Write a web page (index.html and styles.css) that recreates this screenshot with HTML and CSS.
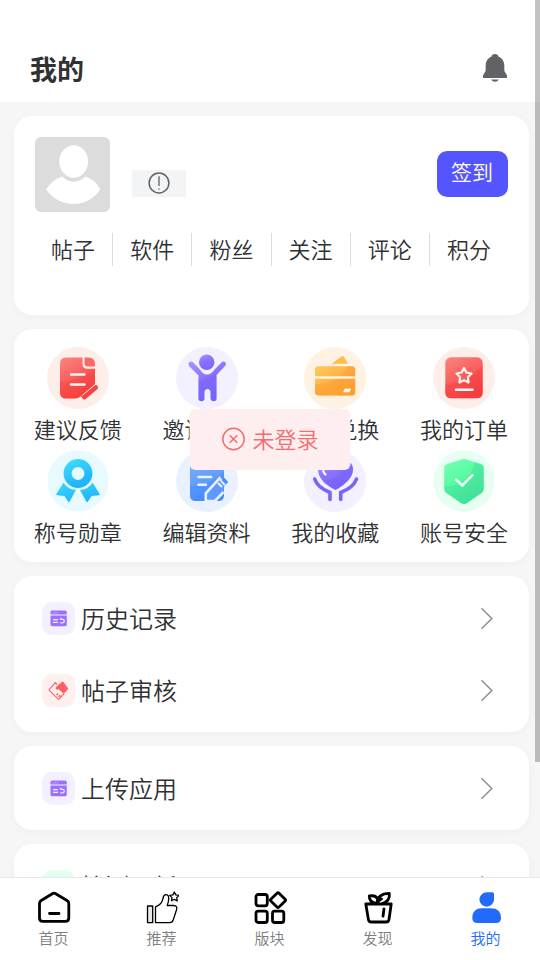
FILE: index.html
```html
<!DOCTYPE html>
<html lang="zh-CN">
<head>
<meta charset="utf-8">
<meta name="viewport" content="width=device-width, initial-scale=1">
<title>我的</title>
<link rel="stylesheet" href="styles.css">
</head>
<body>
<svg class="defs" width="0" height="0" aria-hidden="true">
  <defs>
    <linearGradient id="red" x1="0" y1="0" x2=".5" y2="1"><stop offset="0" stop-color="#f98580"/><stop offset=".5" stop-color="#fa6260"/><stop offset="1" stop-color="#f63f3f"/></linearGradient>
    <linearGradient id="violet" x1="0" y1="0" x2=".5" y2="1"><stop offset="0" stop-color="#ad95ff"/><stop offset=".5" stop-color="#8a72ff"/><stop offset="1" stop-color="#7866fa"/></linearGradient>
    <linearGradient id="orange" x1="0" y1="0" x2="1" y2="1"><stop offset="0" stop-color="#ffc95a"/><stop offset="1" stop-color="#fd9b2b"/></linearGradient>
    <linearGradient id="cyan" x1="0" y1="0" x2=".5" y2="1"><stop offset="0" stop-color="#3ed8fb"/><stop offset="1" stop-color="#1fb6fc"/></linearGradient>
    <linearGradient id="blue" x1="0" y1="0" x2=".5" y2="1"><stop offset="0" stop-color="#7eb0ff"/><stop offset="1" stop-color="#4b90ff"/></linearGradient>
    <linearGradient id="green" x1="0" y1="0" x2=".6" y2="1"><stop offset="0" stop-color="#78ffb8"/><stop offset=".45" stop-color="#5cfba3"/><stop offset="1" stop-color="#45e29b"/></linearGradient>
    <symbol id="chevron" viewBox="0 0 13 23"><path d="M1.500 1.200 11.800 11.500 1.500 21.800" fill="none" stroke="#909399" stroke-width="1.600"/></symbol>
    <symbol id="window" viewBox="0 0 33 33"><path d="M8.500 12.400V10.200q0-1.700 1.700-1.700h12.900q1.700 0 1.700 1.700v2.200zM8.500 13.500h16.300v9q0 1.700-1.700 1.700H10.200q-1.700 0-1.700-1.700z" fill="#9b70ff"/><path d="M10.500 10.900h.9m1.300 0h.9m1.300 0h.9" stroke="#e0d2ff"/><path d="M11 17.700h5m-5 2.600h5m2.700-3h2q1.600 0 1.600 1.800t-2.200 1.800h-1.800m1.100-5-1.500 1.400" stroke="#eee7ff" stroke-width="1.200" fill="none"/></symbol>
  </defs>
</svg>

<header class="header">
  <h1>我的</h1>
  <button class="bell" type="button" aria-label="通知">
    <svg viewBox="0 0 26 30"><path d="M13 1c1.900 0 3.300 1.100 3.600 2.700 3.800 1.400 5.700 4.800 5.700 8.800v4.700c0 2 2.900 4.100 2.900 6.500 0 .8-.5 1.300-1.300 1.300H2.100C1.300 25 .8 24.500.8 23.700c0-2.400 2.900-4.500 2.900-6.500v-4.700c0-4 1.900-7.400 5.700-8.800C9.700 2.100 11.100 1 13 1zM9 26.500h8q-1.600 2.200-4 2.200t-4-2.200z" fill="#606266"/></svg>
  </button>
</header>

<main class="content">
  <section class="card profile">
    <div class="profile-top">
      <svg class="avatar" viewBox="0 0 75 75"><rect width="75" height="75" fill="#dcdcdc"/><ellipse cx="38.700" cy="24.500" rx="14.400" ry="16.300" fill="#fff"/><path d="M27 39.500q11.500 10.500 23.500 0Q60.500 43 65.300 52.500 55 67 38.500 67T11 52.500Q17 43 27 39.500z" fill="#fff"/></svg>
      <span class="level"><svg viewBox="0 0 22 22"><circle cx="11" cy="11" r="9.900" fill="none" stroke="#606266" stroke-width="1.500"/><path d="M11 4.200v9.800m0 2.500v1.200" stroke="#606266" stroke-width="1.300"/></svg></span>
      <button class="sign" type="button">签到</button>
    </div>
    <nav class="stats">
      <a href="#">帖子</a><a href="#">软件</a><a href="#">粉丝</a><a href="#">关注</a><a href="#">评论</a><a href="#">积分</a>
    </nav>
  </section>

  <nav class="card grid">
    <a href="#">
      <svg viewBox="0 0 62 62"><circle cx="31" cy="31" r="31" fill="#feeee9"/><path d="M19 10.500h16.500V17q0 4.700 4.700 4.700H48V37L34 49q-3 2.500-6 2.500h-9q-6 0-6-6v-29q0-6 6-6z" fill="url(#red)"/><path d="M37.500 10.500h4q6.500 0 6.500 6.500v2.500h-7q-3.500 0-3.500-3.500z" fill="#f96a66"/><path d="M13 35Q33 34 48 21.500V37L34 49q-3 2.500-6 2.500h-9q-6 0-6-6z" fill="#f53b3b" opacity=".35"/><path d="M24 27.500h13.500M24 37.500h13.500" stroke="#fff3f0" stroke-width="2.400" stroke-linecap="round"/><path d="m37.500 50 11.300-9.500" stroke="#f54442" stroke-width="4.600" stroke-linecap="round"/><path d="m34.500 48.500 2.600 3.500" stroke="#f54442" stroke-width="1.500"/></svg>
      <span>建议反馈</span>
    </a>
    <a href="#">
      <svg viewBox="0 0 62 62"><circle cx="31" cy="31" r="31" fill="#f3f1ff"/><circle cx="30.700" cy="15.300" r="7.700" fill="url(#violet)"/><path d="M12.500 17.500q0-3 2.800-3 1 0 2 .9L24 22.500q3 5 7 5t7.500-5l7-7.100q1-.9 2-.9 2.300 0 2.300 2.700 0 .9-.8 1.800L40.500 28v23.500q0 2.700-2.800 2.700T34.600 51.500v-6q0-3.500-3.100-3.500t-3.100 3.500v6q0 2.700-3 2.700t-2.900-2.700V28.500l-9.200-9.200q-.8-.8-.8-1.800z" fill="url(#violet)"/><path d="M22.500 34Q31 33 40.500 26v25.500q0 2.700-2.800 2.700T34.600 51.500v-6q0-3.500-3.100-3.500t-3.100 3.500v6q0 2.700-3 2.700t-2.900-2.700z" fill="#705efa" opacity=".35"/></svg>
      <span>邀请好友</span>
    </a>
    <a href="#">
      <svg viewBox="0 0 62 62"><circle cx="31" cy="31" r="31" fill="#fff2e2"/><path d="m27.500 16.800 10-7.300q1.500-1 2.500.4l4 6.900z" fill="#fdbd4b"/><rect x="11" y="19.300" width="40.200" height="29.200" rx="3.500" fill="url(#orange)"/><path d="M11 37.500Q34 37 44 19.300h4q3.200 0 3.200 3.500V45q0 3.500-3.500 3.500H14.500Q11 48.500 11 45z" fill="#fe9c31" opacity=".5"/><path d="M11 30.500h40.200" stroke="#fff2e2" stroke-width="2.600"/><path d="m39 45.200 1.700-3.500h6.200l-1.600 3.500z" fill="#fff"/></svg>
      <span>积分兑换</span>
    </a>
    <a href="#">
      <svg viewBox="0 0 62 62"><circle cx="31" cy="31" r="31" fill="#feeee9"/><rect x="12.300" y="10.300" width="37.400" height="41" rx="5.500" fill="url(#red)"/><path d="M12.300 37Q36 37 49.700 18v28q0 5.300-5.300 5.300H17.600q-5.300 0-5.300-5.300z" fill="#f53b3b" opacity=".4"/><path d="m31 21 2.400 4.500 5.100 1-3.600 3.800.7 5.200-4.600-2.200-4.600 2.200.7-5.200-3.600-3.800 5.100-1z" fill="none" stroke="#fff2f0" stroke-width="2.200" stroke-linejoin="round"/><path d="M23 42.700h16.500" stroke="#fff" stroke-width="2.400" stroke-linecap="round"/></svg>
      <span>我的订单</span>
    </a>
    <a href="#">
      <svg viewBox="0 0 62 62"><circle cx="31" cy="31" r="30.500" fill="#e7faff"/><path d="M16.500 32.500Q20 39 29 40l-6.300 11.500q-.8 1.300-1.700 0L17.500 46l-7.300-.8q-1.500-.2-.7-1.500zM45.500 32.500Q42 39 33 40l6.300 11.500q.8 1.300 1.700 0l3.500-5.500 7.300-.8q1.500-.2.700-1.500z" fill="url(#cyan)"/><circle cx="31" cy="23.500" r="10.400" fill="none" stroke="url(#cyan)" stroke-width="8"/></svg>
      <span>称号勋章</span>
    </a>
    <a href="#">
      <svg viewBox="0 0 62 62"><circle cx="31" cy="31" r="31" fill="#e9f1ff"/><rect x="14" y="10.500" width="34" height="40.500" rx="5.500" fill="url(#blue)"/><path d="M14 36Q34 36 48 22v23.500q0 5.500-5.500 5.500h-23q-5.500 0-5.500-5.500z" fill="#3b84ff" opacity=".35"/><path d="M22.500 27h12.700m-12.700 7.700h7.500" stroke="#edf4ff" stroke-width="2.500" stroke-linecap="round"/><path d="m48.500 34.500-5-6.200-13.700 15V51H39l8.500-9" fill="#5d99ff" stroke="#e9f1ff" stroke-width="2.600"/><path d="m46.800 28.800 4.200 4.500" stroke="#4b8cff" stroke-width="3.500"/><path d="m42 33 4 4" stroke="#e9f1ff" stroke-width="2"/></svg>
      <span>编辑资料</span>
    </a>
    <a href="#">
      <svg viewBox="0 0 62 62"><circle cx="31" cy="31" r="31" fill="#f3f1ff"/><path d="M31.500 40Q14 31 14 19.500C14 9 26 7 31.500 14.500 37 7 49 9 49 19.500 49 31 31.500 40 31.500 40z" fill="url(#violet)"/><path d="M18 31Q38 29 44.500 11.500q4.500 2.500 4.500 8Q49 31 31.500 40 23 36 18 31z" fill="#705efa" opacity=".35"/><path d="M19.500 18q-1 4 2 6.500" fill="none" stroke="#fff" stroke-width="2.200" stroke-linecap="round"/><path d="M10.700 29q2.800 8.500 15.300 13.500v7m26.500-20.500q-2.800 8.500-15.800 13.500v7" fill="none" stroke="#7866fa" stroke-width="3.600" stroke-linecap="round"/></svg>
      <span>我的收藏</span>
    </a>
    <a href="#">
      <svg viewBox="0 0 62 62"><circle cx="31" cy="31" r="30.500" fill="#e5fff0"/><path d="M29 9.200q2-.8 4 0l15.300 5q2.400.8 2.400 3.300V39q0 2.300-1.800 3.700L34 53q-3 1.800-6 0L13 42.700Q11.200 41.300 11.200 39V17.500q0-2.500 2.400-3.300z" fill="url(#green)"/><path d="M11.200 36Q36 37 42 12l6.300 2.200q2.400.8 2.400 3.300V39q0 2.300-1.800 3.700L34 53q-3 1.800-6 0L13 42.700Q11.200 41.300 11.200 39z" fill="#3fdc98" opacity=".4"/><path d="m23.200 29.500 6 6 10.300-10.300" fill="none" stroke="#eafff4" stroke-width="2.600" stroke-linecap="round"/></svg>
      <span>账号安全</span>
    </a>
  </nav>

  <nav class="card menu">
    <a href="#"><svg class="tile purple" viewBox="0 0 33 33"><use href="#window"/></svg><span>历史记录</span><svg class="arrow"><use href="#chevron"/></svg></a>
    <a href="#"><svg class="tile rose" viewBox="0 0 33 33"><path d="m13.500 8.700-6 6.300q-.8.900 0 1.700l8.300 8q.8.800 1.600 0l1.600-1.700" fill="none" stroke="#ff5e63" stroke-width="1.100"/><path d="m14.500 12.500 5.300-4.400q1-.7 1.900.1l4.100 5.800q.6.900-.2 1.700l-3.800 4-5-4.500q-2.500 1.200-3.300-.7z" fill="#ff5e63"/><path d="m12.500 8.500 2.500 1.800m-.5 10.700 1.500-1.500m.5 3.300 1.600-1.600m.5 1.800 1.500-1.500m.4-.4 1.800-1.300" stroke="#ff5e63" stroke-width="1.500"/></svg><span>帖子审核</span><svg class="arrow"><use href="#chevron"/></svg></a>
  </nav>
  <nav class="card menu">
    <a href="#"><svg class="tile purple" viewBox="0 0 33 33"><use href="#window"/></svg><span>上传应用</span><svg class="arrow"><use href="#chevron"/></svg></a>
  </nav>
  <nav class="card menu">
    <a href="#"><svg class="tile mint" viewBox="0 0 33 33"><path d="M10 16.500a6.500 6.500 0 1 1 2 4.500" fill="none" stroke="#3fdc98" stroke-width="2"/></svg><span>检测更新</span><svg class="arrow"><use href="#chevron"/></svg></a>
  </nav>
</main>

<nav class="tabbar">
  <a href="#"><svg viewBox="0 0 34 34"><path d="M15.300 3.700q1.700-1 3.400 0L30 10.500q1.800 1 1.800 3V28q0 3.300-3.300 3.300H5.800q-3.300 0-3.300-3.300V13.500q0-2 1.700-3zM12.500 23.500h9.500" class="bold"/></svg><span>首页</span></a>
  <a href="#"><svg viewBox="0 0 34 34"><path d="M2.500 16h5.200v16.600H2.500z" class="thin cuff"/><path d="M10.500 32.600V16.800c4.500-1.800 7-4.200 7.500-8.500q.6-3.600 3-3.600 2.900 0 2.700 4-.1 3.500-1.500 6.800h6.500q4 .2 2.900 4L28.400 29.500q-.9 3.100-3.600 3.100z" class="thin"/><path d="m29.300 2 1.500 2.900 3.200.5-2.300 2.200.6 3.200-3-1.500-2.800 1.500.5-3.200-2.300-2.200 3.200-.5z" class="thin"/></svg><span>推荐</span></a>
  <a href="#"><svg viewBox="0 0 34 34"><g class="bold"><rect x="3" y="4.500" width="11.300" height="11.300" rx="2.200"/><rect x="3" y="21.200" width="11.300" height="11.300" rx="2.200"/><rect x="19.500" y="21.200" width="11.300" height="11.300" rx="2.200"/><path d="M24 3.200q1-.9 2 0l6.200 6q.9.900 0 1.800l-6.200 6q-1 .9-2 0l-6.200-6q-.9-.9 0-1.800z"/></g></svg><span>版块</span></a>
  <a href="#"><svg viewBox="0 0 34 34"><path d="M4.800 14h25.400L28 29.500q-.4 2.500-2.800 2.500H10.200q-2.400 0-2.800-2.500zM23 18.800l-1 7.400M15.500 13.500Q8 12.500 8.300 6q6.500-1.200 8.300 3.300M16 13.500Q16.500 3.500 28.300 3.300q1 8-7.300 10.200M16.500 13q1-2.800 4-4" class="bold"/></svg><span>发现</span></a>
  <a href="#" class="active" aria-current="page"><svg viewBox="0 0 34 34"><path d="M17.700 2.300h5.700q1.600 0 1.600 1.600v5.600a7.300 7.200 0 1 1-7.300-7.200zM3.300 28q0-9.700 9.700-9.700h9q10 0 10 9.700 0 5-5 5H8.300q-5 0-5-5z" fill="#226bfa"/></svg><span>我的</span></a>
</nav>

<div class="toast" role="alert"><svg viewBox="0 0 24 24"><circle cx="12" cy="12" r="10.700"/><path d="m8.200 8.200 7.600 7.600m0-7.600-7.600 7.600"/></svg><span>未登录</span></div>
<div class="thumb"></div>
</body>
</html>
```
FILE: styles.css
```css
* {
  box-sizing: border-box;
}

body {
  position: relative;
  display: flex;
  flex-direction: column;
  height: 100vh;
  margin: 0;
  overflow: hidden;
  background: #f6f6f6;
  color: #303133;
  font-family: "Noto Sans CJK SC", sans-serif;
  font-weight: 350;
}

a {
  color: inherit;
  text-decoration: none;
}

button {
  border: 0;
  font: inherit;
}

svg {
  display: block;
  flex: none;
}

.defs {
  position: absolute;
}

.header {
  display: flex;
  flex: none;
  align-items: center;
  justify-content: space-between;
  padding: 48px 32px 14px 30px;
  background: #fff;
}

h1 {
  margin: 0;
  padding-top: 2px;
  font-size: 27px;
  font-weight: 700;
  line-height: 38px;
}

.bell {
  padding: 0;
  background: none;
}

.bell svg {
  width: 26px;
  height: 30px;
}

.content {
  display: flex;
  flex: 1;
  flex-direction: column;
  gap: 14px;
  min-height: 0;
  padding: 14px 11px 0 14px;
  overflow: hidden;
}

.card {
  flex: none;
  border-radius: 18px;
  background: #fff;
  box-shadow: 0 2px 10px rgba(0, 0, 0, 0.03);
}

.profile {
  padding: 21px 21px 49px;
}

.profile-top {
  display: flex;
  margin-bottom: 21px;
}

.avatar {
  width: 75px;
  height: 75px;
  border-radius: 6px;
}

.level {
  display: flex;
  justify-content: center;
  align-self: flex-end;
  width: 54px;
  height: 27px;
  margin: 0 auto 15px 22px;
  padding-top: 2px;
  background: #f3f4f6;
}

.level svg {
  width: 22px;
  height: 22px;
}

.sign {
  align-self: center;
  height: 46px;
  margin-bottom: 2px;
  padding: 0 15px 6px 14px;
  border-radius: 10px;
  background: #5555ff;
  color: #fff;
  font-size: 21px;
  line-height: 40px;
}

.stats {
  display: flex;
  margin-left: -1px;
}

.stats a {
  flex: 1;
  padding-bottom: 2px;
  border-right: 1px solid #dadbde;
  font-size: 22px;
  line-height: 31px;
  text-align: center;
}

.stats a:last-child {
  border-right: 0;
}

.grid {
  display: grid;
  grid-template-columns: repeat(4, 1fr);
  padding: 18px 0 9px;
}

.grid a {
  display: flex;
  flex-direction: column;
  align-items: center;
  padding: 0 1px 2px 0;
  font-size: 22px;
  line-height: 39px;
}

.grid svg {
  width: 62px;
  height: 62px;
}

.menu {
  padding: 6px 36px 6px 28px;
}

.menu a {
  display: flex;
  align-items: center;
  height: 72px;
  font-size: 24px;
}

.menu span {
  flex: 1;
  padding: 0 0 2px 6px;
}

.tile {
  width: 33px;
  height: 33px;
  border-radius: 10px;
}

.purple {
  background: #f3f0ff;
}

.rose {
  background: #ffefef;
}

.mint {
  background: #e3ffee;
}

.arrow {
  width: 13px;
  height: 23px;
}

.tabbar {
  display: flex;
  flex: none;
  padding: 12px 0 9px;
  border-top: 1px solid #e8e8ea;
  background: #fff;
  color: #7d7e80;
  font-size: 15px;
  line-height: 27px;
}

.tabbar a {
  display: flex;
  flex: 1;
  flex-direction: column;
  align-items: center;
  padding-right: 1px;
}

.tabbar svg {
  width: 34px;
  height: 34px;
}

.tabbar .active {
  color: #226bfa;
}

.bold,
.thin {
  fill: none;
  stroke: #000;
  stroke-linecap: round;
  stroke-linejoin: round;
}

.bold {
  stroke-width: 2.8;
}

.thin {
  stroke-width: 1.3;
}

.cuff {
  fill: #e6e8ee;
}

.toast {
  position: absolute;
  top: 409px;
  left: 50%;
  display: flex;
  align-items: center;
  gap: 7px;
  padding: 0 32px 2px 32px;
  border-radius: 6px;
  background: #feeeef;
  color: #f56c6c;
  font-size: 22px;
  line-height: 59px;
  white-space: nowrap;
  transform: translateX(-50%);
}

.toast svg {
  width: 24px;
  height: 24px;
  fill: none;
  stroke: #f56c6c;
  stroke-width: 1.5;
}

.thumb {
  position: absolute;
  top: 0;
  right: 0;
  width: 5px;
  height: 79.4%;
  background: rgba(0, 0, 0, 0.24);
}
```
